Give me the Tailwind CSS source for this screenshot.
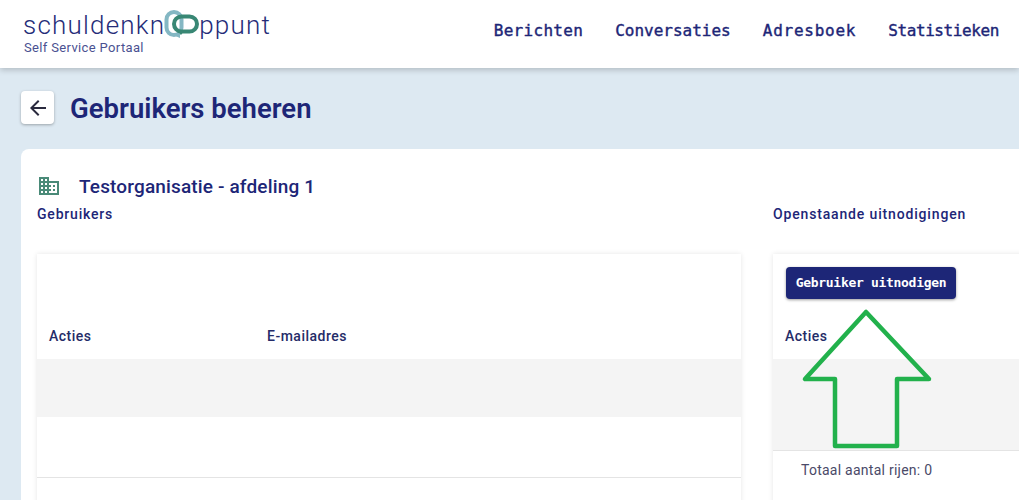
<!DOCTYPE html>
<html lang="nl">
<head>
  <meta charset="UTF-8" />
  <title>Gebruikers beheren</title>
  <script src="https://cdn.jsdelivr.net/npm/@tailwindcss/browser@4"></script>
</head>
<body class="relative h-[500px] w-[1019px] overflow-hidden bg-[#dde9f2] font-['Roboto',sans-serif] text-[#1d2677]">

  <header class="relative z-10 flex h-[68px] items-start justify-between bg-white pl-[23px] pr-5 shadow-[0_2px_6px_rgba(0,0,0,0.2)]">
    <div class="pt-[9px]">
      <div class="relative flex h-[31px] items-center text-[26px] leading-none font-light tracking-[1.2px] text-[#252c78]">
        <span>schuldenkn</span>
        <svg class="-ml-[1px] h-[30px] w-[35px] shrink-0" viewBox="0 0 35 30" fill="none">
          <rect x="2.5" y="2" width="15" height="23" rx="7.5" stroke="#84b7c3" stroke-width="4"/>
          <path d="M9 25l7 3v-3" fill="#84b7c3"/>
          <rect x="10" y="6.5" width="23" height="15" rx="7.5" stroke="#388774" stroke-width="4"/>
          <path d="M14 21l3 4 3-4" fill="#388774"/>
        </svg>
        <span>ppunt</span>
      </div>
      <p class="pl-px text-[13px] leading-[15px] tracking-[0.35px] text-[#4a5191]">Self Service Portaal</p>
    </div>
    <nav class="flex gap-[32px] pt-[19px] font-['DejaVu_Sans_Mono',monospace] text-base leading-[24px] font-medium [-webkit-text-stroke:0.4px_#1d2677]">
      <a class="tracking-[0.3px]">Berichten</a>
      <a>Conversaties</a>
      <a class="tracking-[0.75px]">Adresboek</a>
      <a class="tracking-[-0.4px]">Statistieken</a>
    </nav>
  </header>

  <main class="pl-[21px]">
    <div class="flex h-[81px] items-center gap-4">
      <button class="-mt-[2px] flex h-[33px] w-[33px] items-center justify-center rounded bg-white shadow-[0_1px_3px_rgba(0,0,0,0.3)]">
        <svg class="h-6 w-6" viewBox="0 0 24 24" fill="#2a2a3e"><path d="M20 11H7.83l5.59-5.59L12 4l-8 8 8 8 1.41-1.41L7.83 13H20v-2z"/></svg>
      </button>
      <h1 class="text-[27.5px] leading-none font-semibold">Gebruikers beheren</h1>
    </div>

    <section class="w-[1460px] rounded-t-lg bg-white px-4 pt-[22px] pb-8">
      <div class="flex h-[30px] items-center gap-[18px]">
        <svg class="h-6 w-6 shrink-0" viewBox="0 0 24 24" fill="#4a8a78"><path d="M12 7V3H2v18h20V7H12zM6 19H4v-2h2v2zm0-4H4v-2h2v2zm0-4H4V9h2v2zm0-4H4V5h2v2zm4 12H8v-2h2v2zm0-4H8v-2h2v2zm0-4H8V9h2v2zm0-4H8V5h2v2zm10 12h-8v-2h2v-2h-2v-2h2v-2h-2V9h8v10zm-2-8h-2v2h2v-2zm0 4h-2v2h2v-2z"/></svg>
        <h2 class="text-[19px] leading-none font-medium tracking-[0.15px]">Testorganisatie - afdeling 1</h2>
      </div>

      <div class="mt-[3px] grid grid-cols-[704px_704px] gap-x-8">
        <div>
          <h3 class="h-[20px] text-sm leading-[20px] font-medium tracking-[0.8px]">Gebruikers</h3>
          <div class="mt-[30px] h-[300px] bg-white shadow-[0_0_5px_rgba(0,0,0,0.1)]">
            <div class="flex h-[105px] items-end pb-[13px] text-sm leading-[20px] font-medium tracking-[0.5px] text-[#252c68]">
              <span class="w-[230px] pl-3">Acties</span>
              <span>E-mailadres</span>
            </div>
            <div class="h-[58px] bg-[#f4f4f4]"></div>
            <div class="h-[61px] border-b border-[#e4e4e4]"></div>
          </div>
        </div>

        <div>
          <h3 class="h-[20px] text-sm leading-[20px] font-medium tracking-[0.84px]">Openstaande uitnodigingen</h3>
          <div class="mt-[30px] h-[300px] bg-white shadow-[0_0_5px_rgba(0,0,0,0.1)]">
            <div class="h-[105px] px-3 pt-[13px]">
              <button class="ml-px h-8 w-[170px] rounded bg-[#1d2677] font-['DejaVu_Sans_Mono',monospace] text-[13px] font-bold tracking-[-0.3px] text-white shadow-[0_1px_3px_rgba(0,0,0,0.4)]">Gebruiker uitnodigen</button>
              <p class="mt-[27px] text-sm leading-[20px] font-medium tracking-[0.5px] text-[#252c68]">Acties</p>
            </div>
            <div class="h-[92px] border-b border-[#e4e4e4] bg-[#f4f4f4]"></div>
            <p class="pt-[9px] pl-7 text-sm leading-[20px] tracking-[0.25px] text-[#4a4a68]">Totaal aantal rijen: 0</p>
          </div>
        </div>
      </div>
    </section>
  </main>

  <!-- green annotation arrow drawn on top of the screenshot -->
  <svg class="absolute top-0 left-0 z-20" width="1019" height="500" fill="none">
    <path d="M866 312L805 379H835V446H897V379H929Z" stroke="#22b14c" stroke-width="4.5" stroke-linejoin="round"/>
  </svg>
</body>
</html>
